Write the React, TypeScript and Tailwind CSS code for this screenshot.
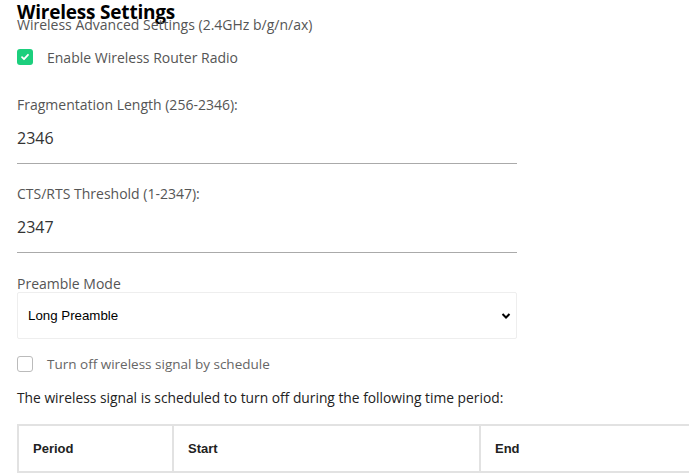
import React from 'react';

const font = { fontFamily: '"Open Sans", "Noto Sans", sans-serif' };

const Field: React.FC<{ label: string; value: string }> = ({ label, value }) => (
  <div className="w-[500px]">
    <div className="text-[14px] text-[#555] leading-[18px]">{label}</div>
    <div className="mt-[14px] text-[16px] text-[#333] leading-[20px]">{value}</div>
    <div className="mt-[15px] h-px bg-[#aaa]" />
  </div>
);

export default function App() {
  return (
    <div className="w-[689px] h-[474px] overflow-hidden bg-white" style={font}>
      <div className="pl-[17px]">
        <h1 className="text-[19px] font-bold text-black leading-[22px] pt-[1px] tracking-[-0.2px]">Wireless Settings</h1>
        <div className="text-[14px] text-[#555] leading-[14px] -mt-[5px]">
          Wireless Advanced Settings (2.4GHz b/g/n/ax)
        </div>

        <label className="flex items-center mt-[17px] h-[16px]">
          <span className="w-[16px] h-[16px] rounded-[3px] bg-[#1ccf7d] flex items-center justify-center">
            <svg width="10" height="10" viewBox="0 0 10 10">
              <path d="M2 5.2l2 2 4-4.4" fill="none" stroke="white" strokeWidth="1.8" strokeLinecap="round" strokeLinejoin="round" />
            </svg>
          </span>
          <span className="ml-[14px] text-[14px] text-[#555]">Enable Wireless Router Radio</span>
        </label>

        <div className="mt-[31px]">
          <Field label="Fragmentation Length (256-2346):" value="2346" />
        </div>
        <div className="mt-[21px]">
          <Field label="CTS/RTS Threshold (1-2347):" value="2347" />
        </div>

        <div className="mt-[22px] text-[14px] text-[#555] leading-[18px]">Preamble Mode</div>
        <div
          className="-mt-[1px] w-[500px] h-[47px] border border-[#eee] rounded-[2px] flex items-center justify-between pl-[10px] pr-[5px]"
          style={{ fontFamily: '"Liberation Sans", Arial, sans-serif' }}
        >
          <span className="text-[13.3px] text-black">Long Preamble</span>
          <svg width="10" height="8" viewBox="0 0 10 8">
            <path d="M1.5 2l3.5 3.5L8.5 2" fill="none" stroke="black" strokeWidth="2" />
          </svg>
        </div>

        <label className="flex items-center mt-[17px] h-[16px]">
          <span className="w-[16px] h-[16px] rounded-[3px] border border-[#bbb] bg-white" />
          <span className="ml-[14px] text-[13.5px] text-[#666]">Turn off wireless signal by schedule</span>
        </label>

        <div className="mt-[17px] text-[13.8px] text-[#222] leading-[18px]">
          The wireless signal is scheduled to turn off during the following time period:
        </div>

        <table
          className="mt-[17px] border-collapse w-[920px] text-[13px] font-bold text-[#222]"
          style={{ fontFamily: '"Liberation Sans", Arial, sans-serif' }}
        >
          <thead>
            <tr className="h-[47px]">
              <th className="w-[155px] border-2 border-[#e2e2e2] text-left pl-[14px] font-bold">Period</th>
              <th className="w-[307px] border-2 border-[#e2e2e2] text-left pl-[14px] font-bold">Start</th>
              <th className="border-2 border-[#e2e2e2] text-left pl-[14px] font-bold">End</th>
            </tr>
          </thead>
        </table>
      </div>
    </div>
  );
}
